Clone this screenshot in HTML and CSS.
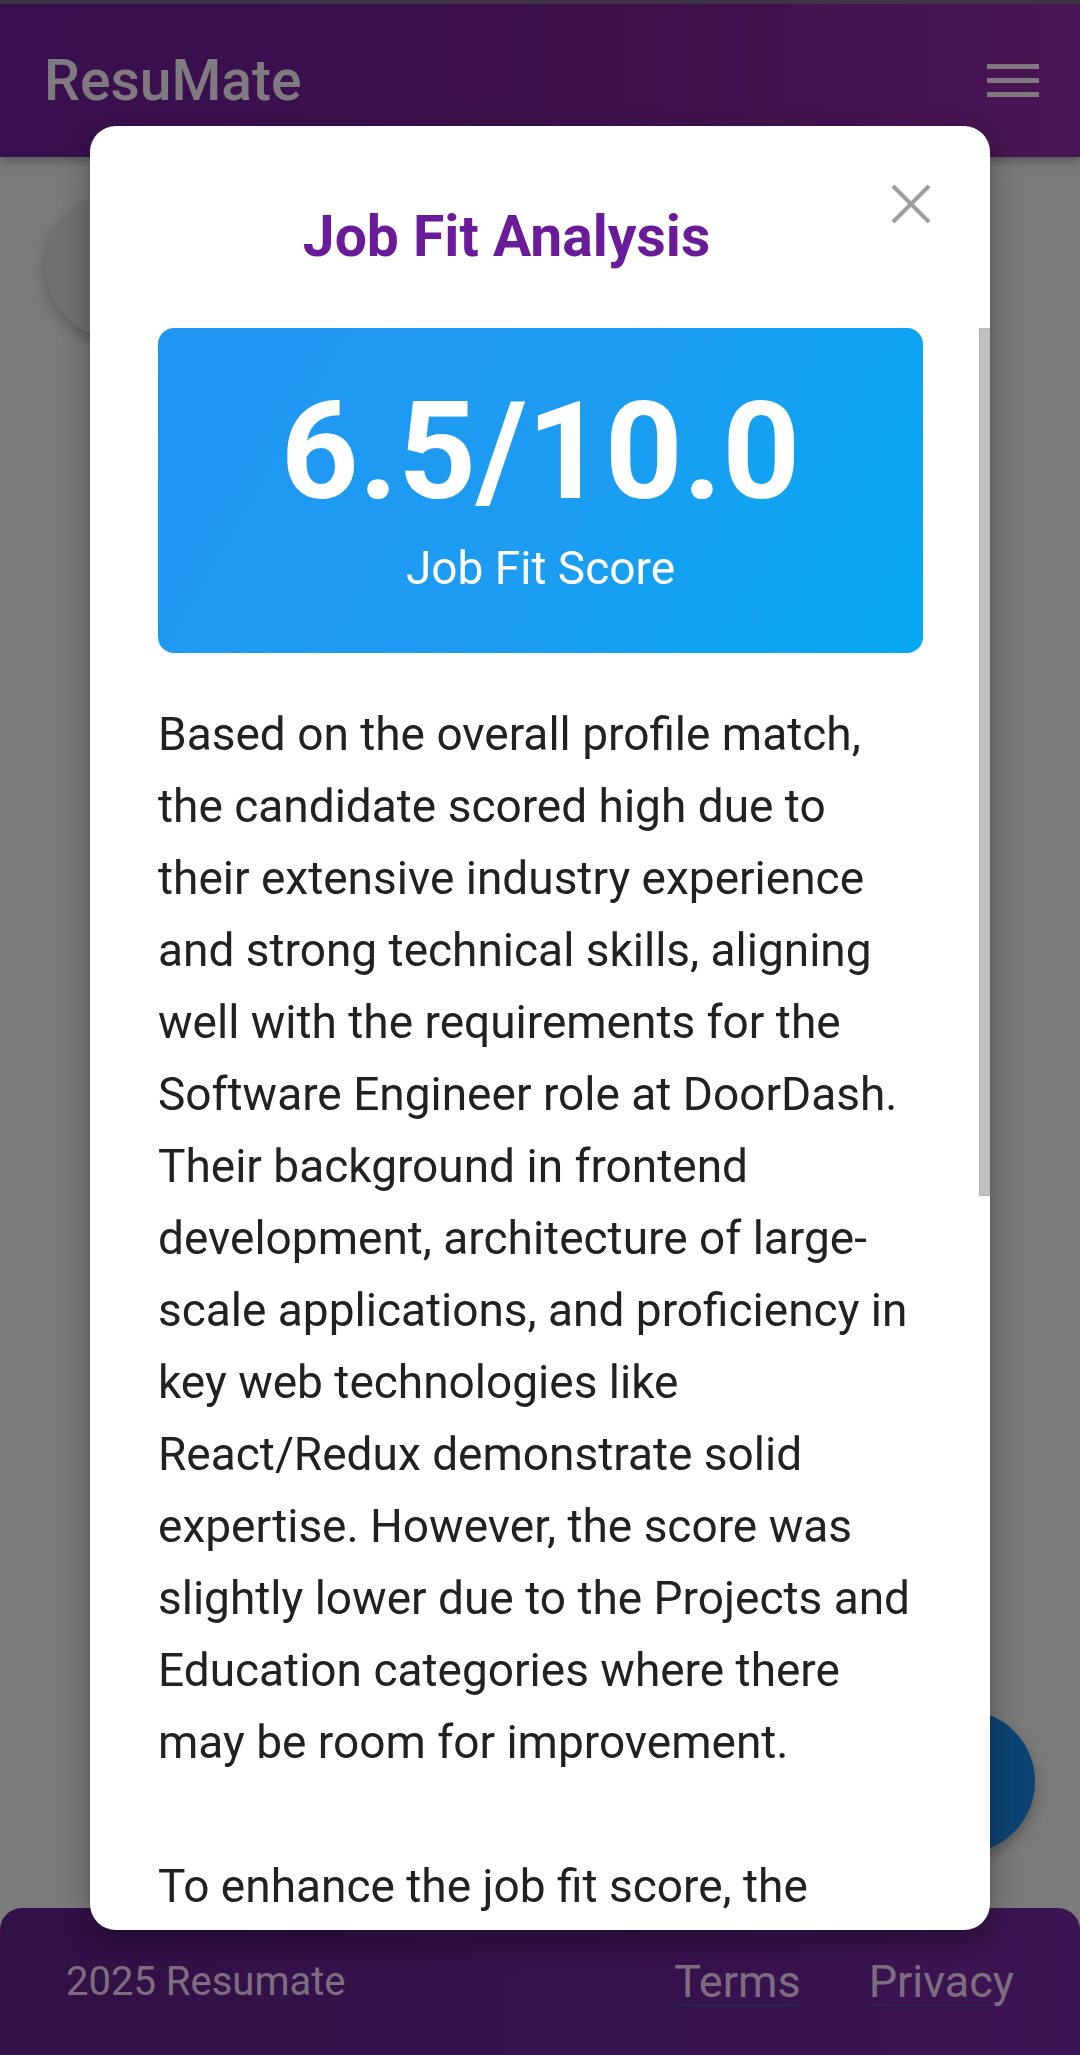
FILE: index.html
```html
<!DOCTYPE html>
<html lang="en">
<head>
<meta charset="utf-8">
<title>ResuMate – Job Fit Analysis</title>
<link rel="stylesheet" href="styles.css">
</head>
<body>
<div class="page">
  <header class="topbar">
    <span class="brand">ResuMate</span>
    <button class="menu-btn" aria-label="Menu"><span></span><span></span><span></span></button>
  </header>
  <main class="content">
    <div class="hero-card"></div>
  </main>
  <footer class="footer">
    <span class="copy">2025 Resumate</span>
    <nav class="footer-links"><a href="#">Terms</a><a href="#">Privacy</a></nav>
  </footer>
</div>
<button class="fab" aria-label="Action"></button>
<div class="backdrop"></div>
<div class="modal" role="dialog" aria-labelledby="fit-title">
  <div class="modal-head">
    <h2 class="modal-title" id="fit-title">Job Fit Analysis</h2>
    <button class="close-btn" aria-label="Close">
      <svg width="44" height="44" viewBox="0 0 44 44"><path d="M4 4 L40 40 M40 4 L4 40" stroke="#9e9e9e" stroke-width="4" fill="none"/></svg>
    </button>
  </div>
  <div class="modal-body">
    <div class="score-card">
      <div class="score">6.5/10.0</div>
      <div class="score-label">Job Fit Score</div>
    </div>
    <p class="analysis">Based on the overall profile match, the candidate scored high due to their extensive industry experience and strong technical skills, aligning well with the requirements for the Software Engineer role at DoorDash. Their background in frontend development, architecture of large-scale applications, and proficiency in key web technologies like React/Redux demonstrate solid expertise. However, the score was slightly lower due to the Projects and Education categories where there may be room for improvement.</p>
    <p class="analysis">To enhance the job fit score, the candidate could highlight personal or open-source projects that demonstrate end-to-end ownership of features, measurable impact, and collaboration with cross-functional teams. Adding details about relevant coursework, certifications, or continued learning in areas such as distributed systems and mobile development would also strengthen the Education section.</p>
    <p class="analysis">Overall, the candidate is a strong contender for this position, and with a few targeted improvements to their resume, they could significantly increase their chances of success.</p>
  </div>
  <div class="scroll-thumb" aria-hidden="true"></div>
</div>
</body>
</html>
```

FILE: styles.css
```css
* { box-sizing: border-box; }

html, body {
  margin: 0;
  padding: 0;
}

body {
  font-family: Roboto, "Noto Sans", "Liberation Sans", sans-serif;
  background: #f6f6f6;
  width: 1080px;
  height: 2055px;
  overflow: hidden;
}

.page {
  min-height: 2055px;
  display: flex;
  flex-direction: column;
}

.topbar {
  height: 157px;
  border-top: 4px solid #7a688c;
  background: linear-gradient(90deg, #721e9e 0%, #7c2299 55%, #942aaa 100%);
  box-shadow: 0 4px 10px rgba(0, 0, 0, 0.3);
  display: flex;
  align-items: center;
  justify-content: space-between;
  padding: 0 41px 0 44px;
}

.brand {
  font-size: 57px;
  font-weight: 500;
  color: #fff4ff;
}

.menu-btn {
  width: 52px;
  padding: 0;
  border: none;
  background: none;
  display: flex;
  flex-direction: column;
  gap: 9px;
}

.menu-btn span {
  display: block;
  height: 5px;
  width: 52px;
  background: #fff0ff;
}

.content {
  flex: 1;
  padding: 36px 0 0 45px;
}

.hero-card {
  width: 700px;
  height: 146px;
  border-radius: 73px;
  background: #e2e2e2;
  box-shadow: 0 6px 14px rgba(0, 0, 0, 0.25);
}

.footer {
  height: 147px;
  border-radius: 22px 22px 0 0;
  background: linear-gradient(90deg, #64228c 0%, #6c249a 60%, #7a28a6 100%);
  display: flex;
  align-items: center;
  justify-content: space-between;
  padding: 0 66px 0 66px;
  color: #f8dcff;
}

.copy {
  font-size: 40px;
}

.footer-links {
  display: flex;
  gap: 68px;
  font-size: 45px;
}

.footer-links a {
  color: #f8dcff;
  text-decoration: underline;
  text-decoration-color: #5444a0;
  text-decoration-thickness: 2px;
  text-underline-offset: 7px;
}

.fab {
  position: fixed;
  right: 45px;
  bottom: 202px;
  width: 143px;
  height: 143px;
  border-radius: 50%;
  border: none;
  background: #1a86e6;
  box-shadow: 0 6px 14px rgba(0, 0, 0, 0.3);
}

.backdrop {
  position: fixed;
  inset: 0;
  background: rgba(0, 0, 0, 0.5);
}

.modal {
  position: fixed;
  left: 90px;
  top: 126px;
  width: 900px;
  height: 1804px;
  background: #ffffff;
  border-radius: 26px;
  box-shadow: 0 10px 30px rgba(0, 0, 0, 0.35);
  display: flex;
  flex-direction: column;
  overflow: hidden;
}

.modal-head {
  display: flex;
  align-items: flex-start;
  padding: 56px 57px 58px 68px;
}

.modal-title {
  flex: 1;
  margin: 21px 0 0;
  text-align: center;
  font-size: 57px;
  font-weight: 700;
  line-height: normal;
  color: #6a1b9a;
}

.close-btn {
  width: 78px;
  height: 44px;
  padding: 0;
  border: none;
  background: none;
  display: flex;
  justify-content: flex-end;
  align-items: flex-start;
}

.close-btn svg { display: block; }

.modal-body {
  flex: 1;
  overflow-y: auto;
  scrollbar-width: none;
  padding: 0 67px 140px 68px;
}

.modal-body::-webkit-scrollbar {
  display: none;
}

.scroll-thumb {
  position: absolute;
  right: 0;
  top: 202px;
  width: 11px;
  height: 868px;
  background: #c1c1c1;
  border: 1px solid #b4b4b4;
}

.score-card {
  height: 325px;
  border-radius: 16px;
  background: linear-gradient(120deg, #2196f3 0%, #1d9cf2 50%, #06a8f2 100%);
  padding: 44px 20px 59px;
  text-align: center;
  color: #ffffff;
}

.score {
  font-size: 136px;
  font-weight: 700;
  line-height: 160px;
}

.score-label {
  margin-top: 10px;
  font-size: 46px;
  line-height: 52px;
}

.analysis {
  margin: 45px 0 0;
  font-size: 46px;
  line-height: 72px;
  color: #212121;
}

.analysis + .analysis {
  margin-top: 72px;
}
```
